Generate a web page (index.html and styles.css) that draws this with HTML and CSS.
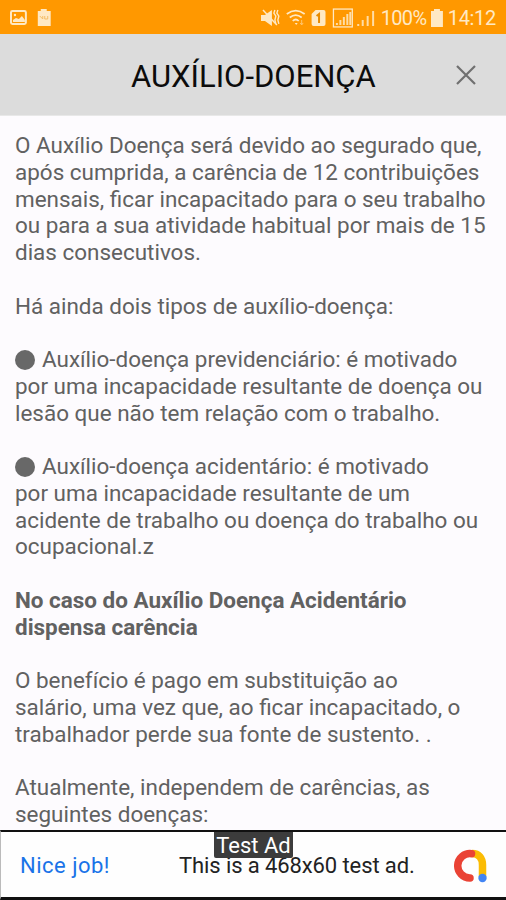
FILE: index.html
```html
<!DOCTYPE html>
<html lang="pt-BR">
<head>
  <meta charset="UTF-8">
  <title>Auxílio-Doença</title>
  <link rel="stylesheet" href="styles.css">
</head>
<body>
  <div class="status">
    <svg class="status-left" width="44" height="20" viewBox="0 0 44 20">
      <rect x="1" y="3" width="15" height="13" rx="1.5" fill="none" stroke="#ffe9c4" stroke-width="2"/>
      <path d="M3 14v-2l3-2 3 1 3-3 3 4v2z" fill="#ffe9c4"/>
      <circle cx="5" cy="7" r="1.2" fill="#ffe9c4"/>
      <path d="M31 1h6v2h4v15H28V3h3z" fill="#ffe9c4"/>
      <path d="M30 8l3 3v-3M35 8v3h3V8" fill="none" stroke="#f3bd66" stroke-width="1"/>
    </svg>
    <svg class="status-right" width="116" height="20" viewBox="0 0 116 20">
      <path d="M1 7h4l7-5v16l-7-5H1z" fill="#ffe9c4"/>
      <path d="M3 2l14 15" stroke="#ffe9c4" stroke-width="1.5"/>
      <path d="M15 2l-1 3 2 3-1 4 1 4M18 2l-1 3 2 3-1 4 1 4" fill="none" stroke="#ffe9c4" stroke-width="1.4"/>
      <path d="M27 6q9-7 18 0M30 9.500q6-5 12 0M33 13q3-3 6 0" fill="none" stroke="#ffe9c4" stroke-width="1.7"/>
      <path d="M35 15h3l-1.500 2z" fill="#ffe9c4"/>
      <path d="M42 12v5M40.500 15l1.500 2 1.500-2" fill="none" stroke="#ffc670"/>
      <path d="M56 2h8q2 0 2 2v12q0 2-2 2h-10q-2 0-2-2V6z" fill="#ffe9c4"/>
      <path d="M57 8l2.500-2v9" fill="none" stroke="#e88b00" stroke-width="2"/>
      <rect x="74" y="1" width="19" height="18" fill="none" stroke="#ffe9c4" stroke-width="1.300"/>
      <path d="M77.500 17v-2M81 17v-5M84.500 17V9M88 17V6M91 17V4M99 18v-2M103.500 18v-6M108.500 18V8M114 18V3" stroke="#ffdda6" stroke-width="2"/>
    </svg>
    <span class="percent">100%</span>
    <svg class="battery" width="12" height="18" viewBox="0 0 12 18">
      <path d="M3 0h6v2h3v16H0V2h3z" fill="#ffe9c4"/>
    </svg>
    <span class="clock">14:12</span>
  </div>

  <div class="header">
    <h1>AUXÍLIO-DOENÇA</h1>
    <svg class="close" width="20" height="20" viewBox="0 0 20 20">
      <path d="M1 1l18 18M19 1L1 19" stroke="#707070" stroke-width="2.200"/>
    </svg>
  </div>

  <div class="content">
    <p>O Auxílio Doença será devido ao segurado que,<br>
    após cumprida, a carência de 12 contribuições<br>
    mensais, ficar incapacitado para o seu trabalho<br>
    ou para a sua atividade habitual por mais de 15<br>
    dias consecutivos.</p>
    <p>Há ainda dois tipos de auxílio-doença:</p>
    <p><span class="dot"></span>Auxílio-doença previdenciário: é motivado<br>
    por uma incapacidade resultante de doença ou<br>
    lesão que não tem relação com o trabalho.</p>
    <p><span class="dot"></span>Auxílio-doença acidentário: é motivado<br>
    por uma incapacidade resultante de um<br>
    acidente de trabalho ou doença do trabalho ou<br>
    ocupacional.z</p>
    <p class="bold">No caso do Auxílio Doença Acidentário<br>
    dispensa carência</p>
    <p>O benefício é pago em substituição ao<br>
    salário, uma vez que, ao ficar incapacitado, o<br>
    trabalhador perde sua fonte de sustento. .</p>
    <p>Atualmente, independem de carências, as<br>
    seguintes doenças:</p>
  </div>

  <div class="ad">
    <span class="nice">Nice job!</span>
    <span class="ad-text">This is a 468x60 test ad.</span>
    <svg class="admob" width="34" height="34" viewBox="0 0 34 34">
      <path d="M18 4.500C25 4.500 28.500 9 28.500 16v12" fill="none" stroke="#fbbc04" stroke-width="7.500"/>
      <path d="M17.500 4.700A12.200 12.200 0 1 0 16 29" fill="none" stroke="#ea4335" stroke-width="7.500" stroke-linecap="round"/>
      <circle cx="28.500" cy="29" r="4.200" fill="#4285f4"/>
    </svg>
    <span class="badge">Test Ad</span>
  </div>
</body>
</html>
```

FILE: styles.css
```css
* {
  box-sizing: border-box;
}
body {
  margin: 0;
  height: 900px;
  overflow: hidden;
  display: flex;
  flex-direction: column;
  background: #fdfbfe;
  font-family: Roboto, sans-serif;
}
.status {
  height: 34px;
  flex: none;
  display: flex;
  align-items: center;
  background: #ff9800;
  color: #ffe9c4;
  padding: 1px 10px 0 10px;
  font-size: 20px;
  white-space: nowrap;
}
.status-right {
  margin-left: 206px;
}
.percent {
  width: 45px;
  margin-left: 6px;
  letter-spacing: -0.7px;
}
.battery {
  margin-left: 5px;
}
.clock {
  margin-left: 5px;
  letter-spacing: -0.3px;
}
.header {
  height: 82px;
  flex: none;
  display: flex;
  align-items: center;
  background: #dcdcdc;
  border-bottom: 1px solid #e8e8e8;
  padding-left: 131px;
}
h1 {
  width: 325px;
  margin: 3px 0 0;
  font-size: 31px;
  font-weight: 400;
  color: #0c0c0c;
  white-space: nowrap;
}
.content {
  flex: 1;
  min-height: 0;
  padding: 16px 15px 0;
  font-size: 22.46px;
  line-height: 26.75px;
  color: #616161;
  white-space: nowrap;
}
.content p {
  margin: 0 0 26.75px;
}
.content .bold {
  font-weight: 700;
}
.dot {
  display: inline-block;
  width: 20px;
  height: 20px;
  margin-right: 7px;
  border-radius: 50%;
  background: #686868;
  vertical-align: -3px;
}
.ad {
  position: relative;
  height: 70px;
  flex: none;
  display: flex;
  align-items: center;
  background: #fefefe;
  border-top: 2px solid #111;
  border-bottom: 3px solid #111;
  border-left: 1px solid #bbb;
  padding: 2px 0 0 19px;
  font-size: 22px;
  white-space: nowrap;
}
.nice {
  width: 159px;
  color: #1a73e8;
  letter-spacing: 0.5px;
}
.ad-text {
  width: 275px;
  color: #222;
  letter-spacing: -0.1px;
}
.badge {
  position: absolute;
  left: 213px;
  top: 0;
  width: 79px;
  height: 26px;
  line-height: 27px;
  text-align: center;
  background: #3c3c3c;
  color: #fff;
  border-radius: 0 0 2px 2px;
}
```
